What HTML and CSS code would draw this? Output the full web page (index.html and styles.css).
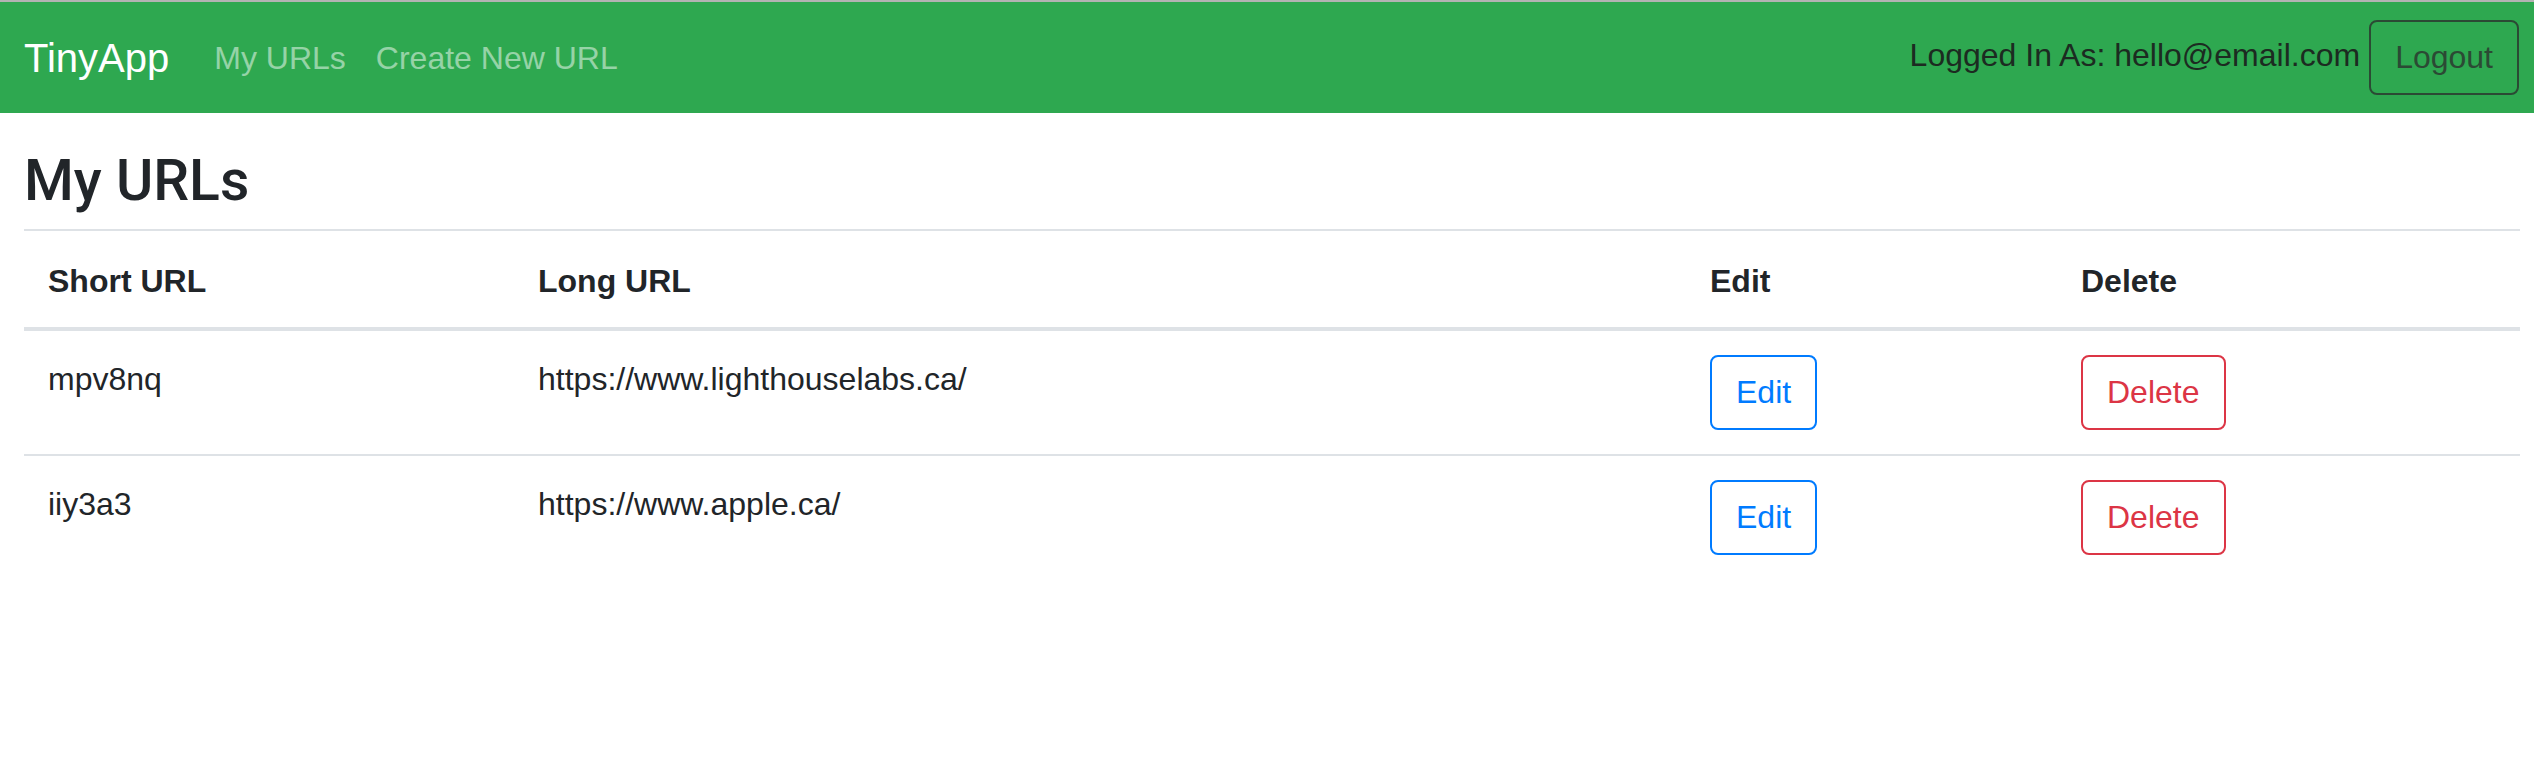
FILE: index.html
```html
<!DOCTYPE html>
<html lang="en">
<head>
<meta charset="utf-8">
<title>TinyApp</title>
<link rel="stylesheet" href="styles.css">
</head>
<body>
<nav class="navbar">
  <a class="brand" href="#">TinyApp</a>
  <div class="nav-links">
    <a class="nav-link" href="#">My URLs</a>
    <a class="nav-link" href="#">Create New URL</a>
  </div>
  <div class="nav-right">
    <span class="nav-text">Logged In As: hello@email.com</span>
    <button class="btn btn-logout">Logout</button>
  </div>
</nav>
<main class="content">
  <h2 class="title">My URLs</h2>
  <table class="table">
    <colgroup>
      <col class="c-short">
      <col class="c-long">
      <col class="c-edit">
      <col class="c-del">
    </colgroup>
    <thead>
      <tr>
        <th>Short URL</th>
        <th>Long URL</th>
        <th>Edit</th>
        <th>Delete</th>
      </tr>
    </thead>
    <tbody>
      <tr>
        <td>mpv8nq</td>
        <td>https://www.lighthouselabs.ca/</td>
        <td><button class="btn btn-edit">Edit</button></td>
        <td><button class="btn btn-delete">Delete</button></td>
      </tr>
      <tr>
        <td>iiy3a3</td>
        <td>https://www.apple.ca/</td>
        <td><button class="btn btn-edit">Edit</button></td>
        <td><button class="btn btn-delete">Delete</button></td>
      </tr>
    </tbody>
  </table>
</main>
</body>
</html>
```
FILE: styles.css
```css
* { box-sizing: border-box; }

body {
  margin: 0;
  font-family: "Liberation Sans", Arial, sans-serif;
  color: #212529;
  background: #ffffff;
}

.navbar {
  display: flex;
  align-items: center;
  height: 113px;
  border-top: 2px solid #b3b3b3;
  background: #2ea850;
  padding: 0 15px 0 24px;
}

.brand {
  font-size: 40px;
  color: #ffffff;
  text-decoration: none;
  margin-right: 30px;
  padding-top: 2px;
}

.nav-links {
  display: flex;
}

.nav-link {
  font-size: 32px;
  color: rgba(255, 255, 255, 0.5);
  text-decoration: none;
  padding: 0 15px;
  line-height: 48px;
}

.nav-right {
  margin-left: auto;
  display: flex;
  align-items: center;
}

.nav-text {
  font-size: 32px;
  color: #1c2b21;
  line-height: 48px;
  margin-top: -6px;
}

.btn {
  font-family: "Liberation Sans", Arial, sans-serif;
  font-size: 32px;
  line-height: 47px;
  padding: 12px 24px;
  background: transparent;
  border: 2px solid;
  border-radius: 8px;
  cursor: pointer;
}

.btn-logout {
  margin-left: 9px;
  color: #2b4a34;
  border-color: #2b4a34;
}

.btn-edit {
  color: #007bff;
  border-color: #007bff;
}

.btn-delete {
  color: #dc3545;
  border-color: #dc3545;
}

.content {
  padding: 0 14px 0 24px;
}

.title {
  font-family: Roboto, "Liberation Sans", Arial, sans-serif;
  font-size: 57px;
  font-weight: 500;
  line-height: 68px;
  margin: 34px 0 14px;
}

.table {
  width: 100%;
  table-layout: fixed;
  border-collapse: collapse;
  font-size: 32px;
  line-height: 48px;
}

.c-short { width: 490px; }
.c-long { width: 1172px; }
.c-edit { width: 371px; }
.c-del { width: 463px; }

.table th {
  text-align: left;
  font-weight: 700;
  padding: 26px 24px 22px;
  border-top: 2px solid #dee2e6;
  border-bottom: 4px solid #dee2e6;
  vertical-align: bottom;
}

.table td {
  padding: 24px;
  border-top: 2px solid #dee2e6;
  vertical-align: top;
}
```
